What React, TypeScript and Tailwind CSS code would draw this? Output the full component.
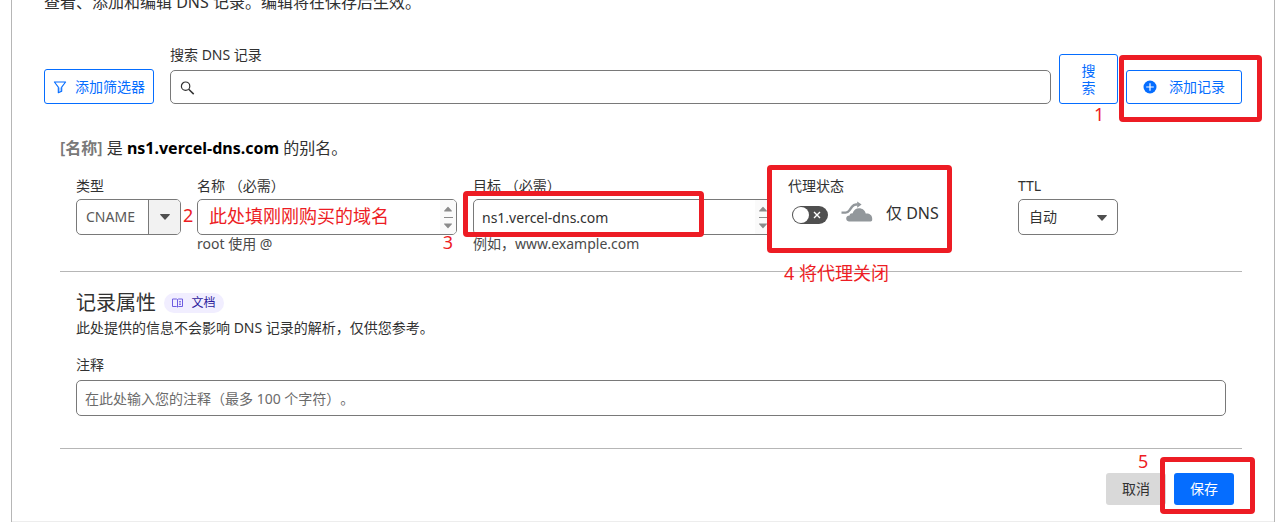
import type { ReactNode } from "react";

const frame = "pointer-events-none absolute z-10 rounded-sm border-[5px] border-[#ed1c24]";
const note = "pointer-events-none absolute z-10 whitespace-nowrap text-lg leading-6 text-[#ed1c24]";
const label = "block whitespace-nowrap text-sm leading-5 text-[#313131]";
const hint = "text-sm leading-[18px] text-[#4a4a4a]";
const box = "h-9 w-full rounded-[5px] border border-[#797979] bg-white text-sm outline-none";

function Caret({ className }: { className: string }) {
  return (
    <svg className={className} width="10" height="6" viewBox="0 0 10 6" fill="currentColor" aria-hidden="true">
      <path d="M0.6 0h8.8c.5 0 .7.5.4.8L5.5 5.6a.7.7 0 0 1-1 0L.2.8C-.1.5.1 0 .6 0z" />
    </svg>
  );
}

function Stepper() {
  return (
    <span className="pointer-events-none absolute inset-y-px right-px flex w-4 flex-col items-center justify-center gap-[5px] rounded-r bg-[#fafafa] text-[#8b8b8b]">
      <Caret className="h-[6px] w-2 rotate-180" />
      <span className="h-px w-[9px] bg-[#8b8b8b]" />
      <Caret className="h-[6px] w-2" />
    </span>
  );
}

function Field({ id, text, children }: { id: string; text: string; children: ReactNode }) {
  return (
    <div className="relative min-w-0">
      <label htmlFor={id} className={label}>{text}</label>
      <div className="mt-[3px]">{children}</div>
    </div>
  );
}

function Toolbar() {
  return (
    <div className="mt-[31px] flex items-end">
      <button type="button" className="flex h-[35px] w-[110px] shrink-0 items-center justify-center gap-2 rounded-[3px] border border-[#056dff] text-sm text-[#056dff]">
        <svg width="14" height="14" viewBox="0 0 14 14" fill="none" stroke="currentColor" aria-hidden="true">
          <path d="M5 7.4h4v4.2L5 12.6z" fill="currentColor" fillOpacity=".35" stroke="none" />
          <path d="M1.4 2h11.2L8.7 7.2v4L5.3 12.8V7.2z" strokeWidth="1.1" strokeLinejoin="round" />
        </svg>
        添加筛选器
      </button>
      <div className="ml-4 min-w-0 flex-1">
        <label htmlFor="search" className={label}>搜索 DNS 记录</label>
        <div className="relative mt-[5px]">
          <svg className="absolute left-[10px] top-[11px] text-[#313131]" width="15" height="15" viewBox="0 0 15 15" fill="none" stroke="currentColor" aria-hidden="true">
            <circle cx="5.6" cy="5.2" r="4.2" strokeWidth="1.2" />
            <path d="M8.7 8.3l5 4.8" strokeWidth="1.5" />
          </svg>
          <input id="search" type="text" className="h-[34px] w-full rounded-[5px] border border-[#797979] bg-white pl-8 pr-3 text-sm outline-none" />
        </div>
      </div>
      <div className="relative ml-2 shrink-0">
        <button type="button" className="block h-[50px] w-[59px] rounded-[3px] border border-[#056dff] px-5 text-sm leading-[17px] text-[#056dff]">搜索</button>
        <span className={`${note} left-[35px] top-12`}>1</span>
      </div>
      <div className="relative ml-2 shrink-0">
        <button type="button" className="flex h-[34px] w-[116px] items-center justify-center gap-3 rounded-[3px] border border-[#056dff] text-sm text-[#056dff]">
          <svg width="14" height="14" viewBox="0 0 14 14" aria-hidden="true">
            <circle cx="7" cy="7" r="6.5" fill="currentColor" />
            <path d="M7 3.200v7.600M3.200 7h7.600" stroke="#fff" strokeWidth="1.2" />
          </svg>
          添加记录
        </button>
        <span className={`${frame} -bottom-[18px] -left-[7px] -right-[20px] -top-[15px]`} />
      </div>
    </div>
  );
}

function RecordFields() {
  return (
    <div className="mt-4 grid grid-cols-[105px_minmax(0,260fr)_minmax(0,299fr)_minmax(0,214fr)_208px] gap-4 px-4">
      <Field id="type" text="类型">
        <div className="relative">
          <select id="type" className={`${box} appearance-none pl-[9px] text-[#595959]`}>
            <option>CNAME</option>
          </select>
          <span className="pointer-events-none absolute inset-y-px right-px flex w-8 items-center justify-center rounded-r border-l border-[#797979] bg-[#f2f2f2] text-[#4f4f4f]">
            <Caret className="" />
          </span>
        </div>
        <span className={`${note} left-[107px] top-[27px]`}>2</span>
      </Field>

      <Field id="name" text="名称 （必需）">
        <div className="relative">
          <input id="name" type="text" className={`${box} px-2 text-[#313131]`} />
          <Stepper />
          <span className={`${note} left-3 top-[5px]`}>此处填刚刚购买的域名</span>
        </div>
        <p className={hint}>root 使用 @</p>
        <span className={`${note} right-1 top-[54px]`}>3</span>
      </Field>

      <Field id="target" text="目标 （必需）">
        <div className="relative">
          <input id="target" type="text" defaultValue="ns1.vercel-dns.com" className={`${box} px-2 text-[#313131]`} />
          <Stepper />
          <span className={`${frame} -bottom-[2px] -left-[10px] -top-2 right-[68px]`} />
        </div>
        <p className={hint}>例如，www.example.com</p>
      </Field>

      <Field id="proxy" text="代理状态">
        <div className="flex items-center pl-1">
          <span className="relative mt-[3px] flex h-[18px] w-9 shrink-0">
            <input id="proxy" type="checkbox" role="switch" className="h-full w-full appearance-none rounded-full bg-[#4f4f4f]" />
            <span className="pointer-events-none absolute left-px top-px size-4 rounded-full bg-white" />
            <svg className="pointer-events-none absolute right-[7px] top-[5px]" width="8" height="8" viewBox="0 0 8 8" stroke="#fff" strokeWidth="1.4" aria-hidden="true">
              <path d="M1 1l6 6M7 1L1 7" />
            </svg>
          </span>
          <svg className="mb-1 ml-[13px] shrink-0" width="32" height="21" viewBox="0 0 32 21" fill="none" aria-hidden="true">
            <path d="M.5 11.600h4.100c1.800 0 2.700-.6 3.800-2.200l2.600-3.700c1.100-1.500 2.200-2.200 4-2.200h1.600" stroke="#92979b" strokeWidth="2.400" />
            <path d="M16.200.4l4.400 3-4.400 3.300z" fill="#92979b" />
            <path d="M7.800 20.400c-1.700 0-2.600-1.200-2.600-2.800 0-1.900 1.400-3.100 3.400-3.100.2-1.500 1.400-2.300 2.900-2.100C12.600 9.200 15.100 7.300 18 7.300c3.500 0 6 2.200 6.700 5.200 3.900-.3 6.500 1.800 6.500 5v1.300c0 1-.6 1.600-1.600 1.600z" fill="#92979b" />
          </svg>
          <span className="ml-[13px] whitespace-nowrap text-base leading-7 text-[#313131]">仅 DNS</span>
        </div>
        <span className={`${frame} -left-[21px] -top-[11px] h-[88px] w-[185px]`} />
        <span className={`${note} -left-1 top-[85px]`}>4 将代理关闭</span>
      </Field>

      <Field id="ttl" text="TTL">
        <div className="relative w-[100px]">
          <select id="ttl" className={`${box} appearance-none pl-[10px] text-[#313131]`}>
            <option>自动</option>
          </select>
          <Caret className="pointer-events-none absolute right-[11px] top-4 text-[#4f4f4f]" />
        </div>
      </Field>
    </div>
  );
}

export default function App() {
  return (
    <div className="overflow-hidden bg-white font-['Noto_Sans','Noto_Sans_CJK_SC',sans-serif] text-[#313131] [text-spacing-trim:space-all]">
      <main className="ml-[11px] mr-[10px] border-x border-[#b6b6b6]">
        <section className="px-8">
          <p className="-mt-[10px] text-base leading-6">查看、添加和编辑 DNS 记录。编辑将在保存后生效。</p>
          <Toolbar />
          <form className="pl-4" onSubmit={(e) => e.preventDefault()}>
            <p className="mt-8 text-base leading-6">
              <span className="font-semibold text-[#797979]">[名称]</span> 是{" "}
              <strong className="font-bold text-black">ns1.vercel-dns.com</strong> 的别名。
            </p>
            <RecordFields />
            <hr className="mt-[18px] border-[#b6b6b6]" />
            <div className="px-4">
              <div className="mt-[17px] flex items-center gap-2">
                <h2 className="text-xl leading-7">记录属性</h2>
                <a href="#docs" className="flex h-5 w-[60px] items-center justify-center gap-2 rounded-full bg-[#f1eeff] text-xs text-[#2c1a9c]">
                  <svg width="11" height="10" viewBox="0 0 11 10" fill="none" stroke="#6e5ce0" aria-hidden="true">
                    <path d="M5.500 1.500v7.500M.5 1h4l1 .5 1-.5h4v7.500h-4l-1 .5-1-.5h-4z" />
                    <path d="M7 3.500h2M7 5h2M7 6.500h2" strokeWidth=".8" />
                  </svg>
                  文档
                </a>
              </div>
              <p className="mt-px text-sm leading-5">此处提供的信息不会影响 DNS 记录的解析，仅供您参考。</p>
              <label htmlFor="comment" className={`${label} mt-[17px]`}>注释</label>
              <input id="comment" type="text" placeholder="在此处输入您的注释（最多 100 个字符）。" className={`${box} mt-[5px] px-2 [text-spacing-trim:space-all] placeholder:text-[#6b6b6b]`} />
            </div>
            <hr className="mt-8 border-[#b6b6b6]" />
            <div className="mt-6 flex justify-end gap-2 pr-2 text-sm">
              <div className="relative">
                <button type="button" className="h-8 w-[60px] rounded-[3px] bg-[#d9d9d9] text-[#313131]">取消</button>
                <span className={`${note} left-8 -top-6`}>5</span>
              </div>
              <div className="relative">
                <button type="submit" className="h-8 w-[60px] rounded-[3px] bg-[#056dff] text-white">保存</button>
                <span className={`${frame} -bottom-[9px] -left-[14px] -right-[21px] -top-4`} />
              </div>
            </div>
          </form>
        </section>
        <div className="mt-4 border-t border-[#ededed]" />
      </main>
    </div>
  );
}
